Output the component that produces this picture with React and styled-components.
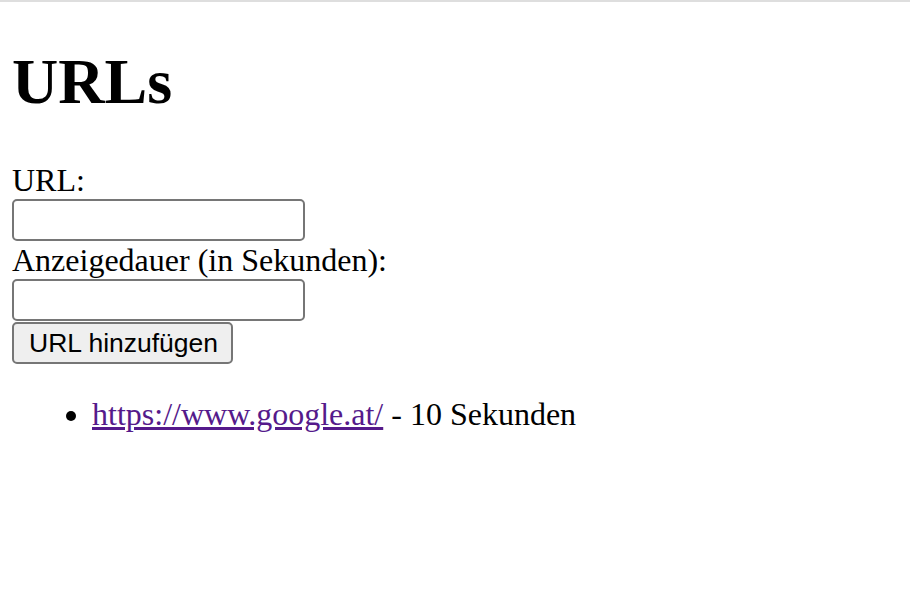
import styled, { createGlobalStyle } from "styled-components";

const GlobalStyle = createGlobalStyle`
  html, body {
    margin: 0;
    padding: 0;
    background: #fff;
  }
  body {
    font-family: "Liberation Serif", "Times New Roman", serif;
    color: #000;
  }
`;

const urls = [{ id: 1, url: "https://www.google.at/", duration: 10 }];

const App = () => {
  return (
    <>
      <GlobalStyle />
      <TopBar />
      <Page>
        <Title>URLs</Title>
        <Form onSubmit={(e) => e.preventDefault()}>
          <Label htmlFor="url">URL:</Label>
          <Input id="url" type="text" />
          <Label htmlFor="duration">Anzeigedauer (in Sekunden):</Label>
          <Input id="duration" type="text" />
          <Button type="submit">URL hinzufügen</Button>
        </Form>
        <List>
          {urls.map((item) => (
            <Item key={item.id}>
              <Link href={item.url}>{item.url}</Link> - {item.duration} Sekunden
            </Item>
          ))}
        </List>
      </Page>
    </>
  );
};

export default App;

const TopBar = styled.div`
  height: 2px;
  background: #dedede;
`;

const Page = styled.main`
  padding: 0 12px;
`;

const Title = styled.h1`
  font-size: 64px;
  font-weight: bold;
  line-height: 74px;
  margin: 43px 0 43px;
`;

const Form = styled.form`
  display: flex;
  flex-direction: column;
  align-items: flex-start;
`;

const Label = styled.label`
  display: block;
  font-size: 32px;
  line-height: 36px;
`;

const Input = styled.input`
  display: block;
  box-sizing: border-box;
  width: 293px;
  height: 42px;
  margin: 1px 0 1px;
  border: 2px solid #767676;
  border-radius: 5px;
  background: #fff;
  outline: none;
`;

const Button = styled.button`
  box-sizing: border-box;
  width: 221px;
  height: 42px;
  margin: 0;
  padding: 0 15px;
  border: 2px solid #767676;
  border-radius: 5px;
  background: #efefef;
  font-family: "Liberation Sans", Arial, sans-serif;
  font-size: 26.5px;
  color: #000;
  text-align: left;
  white-space: nowrap;
`;

const List = styled.ul`
  margin: 32px 0 0;
  padding-left: 80px;
`;

const Item = styled.li`
  font-size: 32px;
  line-height: 37px;
`;

const Link = styled.a`
  color: #551a8b;
  text-decoration: underline;
`;
